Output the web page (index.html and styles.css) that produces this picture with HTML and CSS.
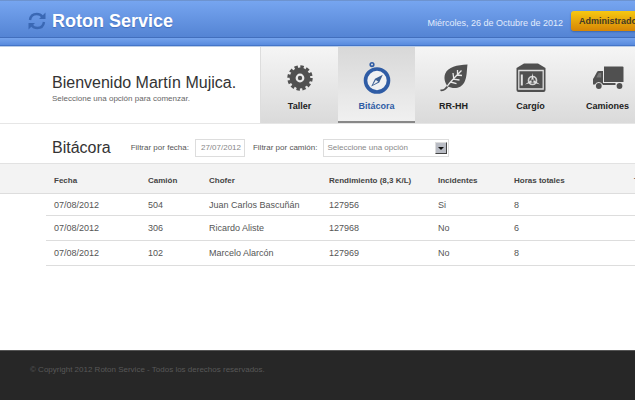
FILE: index.html
```html
<!DOCTYPE html>
<html lang="es">
<head>
    <meta charset="UTF-8">
    <meta name="viewport" content="width=device-width, initial-scale=1.0">
    <title>Roton Service - Bitácora</title>
    <link rel="stylesheet" href="styles.css">
</head>
<body>
    <header id="header">
        <a class="logo" href="#">
            <svg width="18" height="18" viewBox="0 0 18 18" fill="none" stroke="#3a68b4" stroke-width="2.4">
                <path d="M2 8C2.5 4.200 5.300 2 8.800 2c2.300 0 4.200 1 5.500 2.800"/>
                <path d="M16 10c-.5 3.800-3.300 6-6.800 6-2.300 0-4.200-1-5.500-2.800"/>
                <path d="M17.500.5v6.500H11zM.5 17.500V11H7z" fill="#3a68b4" stroke="none"/>
            </svg>
            <span>Roton Service</span>
        </a>
        <div class="session">
            <span class="date">Miércoles, 26 de Octubre de 2012</span>
            <button class="user-btn" type="button">Administrador</button>
        </div>
    </header>
    <div class="strip"></div>

    <div id="top">
        <div class="welcome">
            <h1>Bienvenido Martín Mujica.</h1>
            <p>Seleccione una opción para comenzar.</p>
        </div>
        <nav class="menu">
            <a href="#">
                <svg width="26" height="32" viewBox="0 0 26 32">
                    <circle cx="13" cy="16" r="7.4" fill="none" stroke="#505050" stroke-width="6"/>
                    <circle cx="13" cy="16" r="11.2" fill="none" stroke="#505050" stroke-width="3" stroke-dasharray="3.4 2.464"/>
                    <circle cx="13" cy="16" r="2.2" fill="#505050"/>
                </svg>
                Taller
            </a>
            <a href="#" class="active">
                <svg width="28" height="32" viewBox="0 0 28 32">
                    <circle cx="9" cy="2.600" r="1.800" fill="none" stroke="#2f5ca5" stroke-width="1.600"/>
                    <circle cx="14" cy="18.500" r="11.500" fill="#f0f1f3" stroke="#2f5ca5" stroke-width="3.600"/>
                    <path d="M19.800 12.800l-3.600 7.600-8 4 3.800-7.600z" fill="#3c5f93"/>
                    <path d="M12.800 18l2.600 1.800-5.400 3z" fill="#f0f1f3"/>
                </svg>
                Bitácora
            </a>
            <a href="#">
                <svg width="28" height="32" viewBox="0 0 28 32">
                    <path d="M27.500 2.500C17 3 8 5 5.300 11.500c-2 5 0 9.500 2 12.500 6 3.500 13.500 3 17.200-4 2.600-5 2.200-11.500 3-17.500z" fill="#505050"/>
                    <path d="M.5 28.200c4 .7 6-2.200 8.500-6.200" fill="none" stroke="#505050" stroke-width="1.800"/>
                    <path d="M7 24.500C10 20 16 14 21.500 8.500M17.500 12.500V8M13.700 16.500l-.7-5.500M17 13l5 .5M13 17.200l6.500.8M10.500 20l6 1.600" fill="none" stroke="#e8e8e8" stroke-width="1.300"/>
                </svg>
                RR-HH
            </a>
            <a href="#">
                <svg width="30" height="32" viewBox="0 0 30 32">
                    <path d="M8 1.500h14l7.500 4.500v22q0 2-2 2h-25q-2 0-2-2V6z" fill="#505050"/>
                    <path d="M2.800 8.500h24.400v18.500H2.800z" fill="none" stroke="#dedede" stroke-width="1.300"/>
                    <path d="M5.800 12.500v11" stroke="#e4e4e4" stroke-width="2"/>
                    <circle cx="16.500" cy="18.500" r="4" fill="none" stroke="#d2d2d2" stroke-width="1.700"/>
                    <path d="M16.500 11l1.200 7 6.300 4.500-7.500-2.300L9 22.500l6.300-4.500z" fill="#e4e4e4"/>
                    <circle cx="16.500" cy="18.700" r="1.200" fill="#505050"/>
                </svg>
                Cargío
            </a>
            <a href="#">
                <svg width="32" height="32" viewBox="0 0 32 32">
                    <path d="M12 4.500h18.500q1 0 1 1v14.500H12z" fill="#505050"/>
                    <path d="M11 9H6.500Q5.500 9 5 10L2 15.500 1 17v5.500h2a4 4 0 0 1 7.500 0h.5z" fill="#505050"/>
                    <path d="M6.700 11h2.500v4.500H4.300z" fill="#777"/>
                    <circle cx="6.800" cy="24" r="2.900" fill="#505050"/>
                    <circle cx="27.500" cy="24" r="2.900" fill="#505050"/>
                    <path d="M11 22h12.500" stroke="#505050" stroke-width="2"/>
                </svg>
                Camiones
            </a>
        </nav>
    </div>

    <form class="filters">
        <h2>Bitácora</h2>
        <label for="fecha">Filtrar por fecha:</label>
        <input type="text" id="fecha" value="27/07/2012">
        <label for="camion">Filtrar por camión:</label>
        <div class="select">
            <select id="camion">
                <option>Seleccione una opción</option>
                <option>504</option>
                <option>306</option>
                <option>102</option>
            </select>
            <span class="arrow"></span>
        </div>
    </form>

    <div class="log">
        <table>
            <thead>
                <tr>
                    <th class="edge"></th>
                    <th class="fecha">Fecha</th>
                    <th class="camion">Camión</th>
                    <th class="chofer">Chofer</th>
                    <th class="rendimiento">Rendimiento (8,3 K/L)</th>
                    <th class="incidentes">Incidentes</th>
                    <th class="horas">Horas totales</th>
                    <th class="total">Total</th>
                </tr>
            </thead>
            <tbody>
                <tr>
                    <td class="edge"></td>
                    <td>07/08/2012</td>
                    <td>504</td>
                    <td>Juan Carlos Bascuñán</td>
                    <td>127956</td>
                    <td>Si</td>
                    <td>8</td>
                    <td></td>
                </tr>
                <tr>
                    <td class="edge"></td>
                    <td>07/08/2012</td>
                    <td>306</td>
                    <td>Ricardo Aliste</td>
                    <td>127968</td>
                    <td>No</td>
                    <td>6</td>
                    <td></td>
                </tr>
                <tr>
                    <td class="edge"></td>
                    <td>07/08/2012</td>
                    <td>102</td>
                    <td>Marcelo Alarcón</td>
                    <td>127969</td>
                    <td>No</td>
                    <td>8</td>
                    <td></td>
                </tr>
            </tbody>
        </table>
    </div>

    <footer id="footer">© Copyright 2012 Roton Service - Todos los derechos reservados.</footer>
</body>
</html>
```
FILE: styles.css
```css
* {
    box-sizing: border-box;
}

body {
    margin: 0;
    min-height: 100vh;
    display: flex;
    flex-direction: column;
    overflow: hidden;
    background: #fff;
    color: #555;
    font-family: "Liberation Sans", Arial, sans-serif;
    font-size: 9px;
}

h1, h2, p {
    margin: 0;
}

h1, h2 {
    color: #333;
    font-size: 16px;
    font-weight: normal;
    line-height: 20px;
}

/* Cabecera */
#header {
    display: flex;
    justify-content: space-between;
    height: 38px;
    padding-left: 28px;
    background: linear-gradient(to bottom, #76a5f0, #5484d4);
    border-top: 1px solid #6d93cf;
    border-bottom: 1px solid #426fbd;
}

.logo {
    display: flex;
    align-items: center;
    gap: 6px;
    padding-top: 4px;
    color: #fff;
    font-size: 18px;
    font-weight: bold;
    text-decoration: none;
    text-shadow: 0 1px 1px #426fbd;
}

.session {
    display: flex;
    align-items: center;
    gap: 8px;
    margin-right: -16px;
    padding-top: 4px;
}

.date {
    color: #e2ecfc;
    padding-top: 4px;
}

.user-btn {
    width: 80px;
    height: 20px;
    padding: 0 8px;
    border: 0;
    border-radius: 3px;
    background: linear-gradient(to bottom, #f6c811, #d68505);
    box-shadow: 0 1px 2px #3c66ad;
    color: #443a25;
    font: bold 9px "Liberation Sans", Arial, sans-serif;
    text-align: left;
    white-space: nowrap;
}

.strip {
    height: 9px;
    background: linear-gradient(to bottom, #75a3ec, #5487dc);
    border-bottom: 1px solid #b9cce6;
    box-shadow: inset 0 -1px #4475c8;
}

/* Bienvenida y menu */
#top {
    display: flex;
    justify-content: space-between;
    height: 77px;
    border-bottom: 1px solid #e6e6e6;
}

.welcome {
    padding: 26px 0 0 52px;
}

.welcome p {
    font-size: 8px;
    line-height: 12px;
    color: #666;
}

.menu {
    display: flex;
    flex: none;
    margin-right: -11px;
    border-left: 1px solid #ddd;
    background: linear-gradient(to bottom, #f5f5f5, #dadada);
}

.menu a {
    display: flex;
    flex-direction: column;
    align-items: center;
    gap: 6px;
    width: 77px;
    padding-top: 15px;
    color: #222;
    font-weight: bold;
    line-height: 12px;
    text-decoration: none;
}

.menu .active {
    background: linear-gradient(to bottom, #d8d8d8, #f0f0f0);
    border-bottom: 2px solid #888;
    color: #2f5ca5;
}

/* Filtros */
.filters {
    display: flex;
    align-items: center;
    height: 39px;
    padding: 8px 0 0 52px;
    font-size: 8px;
}

.filters h2 {
    margin-right: 20px;
}

.filters input,
.filters select {
    height: 18px;
    margin: 0;
    border: 1px solid #ddd;
    background: #fff;
    color: #888;
    font: 8px "Liberation Sans", Arial, sans-serif;
}

.filters input {
    width: 50px;
    margin: 0 8px 0 6px;
    padding: 0 0 0 5px;
}

.select {
    position: relative;
    margin-left: 6px;
}

.filters select {
    display: block;
    width: 126px;
    padding: 0 16px 0 3px;
    border-radius: 0;
    appearance: none;
}

.arrow {
    position: absolute;
    top: 3px;
    right: 2px;
    width: 12px;
    height: 12px;
    border: 1px solid;
    border-color: #ddd #444 #444 #ddd;
    background: #b9bcc4;
    pointer-events: none;
}

.arrow::after {
    content: "";
    position: absolute;
    top: 4px;
    left: 2px;
    border: 3px solid transparent;
    border-top-color: #111;
    border-bottom: 0;
}

/* Tabla */
.log {
    margin-right: -40px;
}

table {
    width: 100%;
    border-collapse: collapse;
    table-layout: fixed;
}

th, td {
    padding: 0;
    text-align: left;
    white-space: nowrap;
}

th {
    height: 30px;
    padding-top: 3px;
    background: #f3f3f3;
    border-top: 1px solid #e2e2e2;
    border-bottom: 1px solid #ddd;
    color: #444;
    font-size: 8px;
}

td {
    height: 25px;
    border-bottom: 1px solid #ddd;
}

.edge {
    width: 46px;
}

td.edge {
    border-bottom: 0;
}

th:nth-child(2),
td:nth-child(2) {
    padding-left: 8px;
}

tbody tr:first-child td {
    height: 22px;
}

.fecha {
    width: 102px;
}

.camion {
    width: 61px;
}

.chofer {
    width: 120px;
}

.rendimiento {
    width: 109px;
}

.incidentes {
    width: 76px;
}

.horas {
    width: 120px;
}

/* Pie */
#footer {
    height: 50px;
    margin-top: auto;
    padding: 14px 30px;
    background: #272727;
    border-top: 1px solid #555;
    color: #585858;
    font-size: 8px;
    line-height: 10px;
}
```
